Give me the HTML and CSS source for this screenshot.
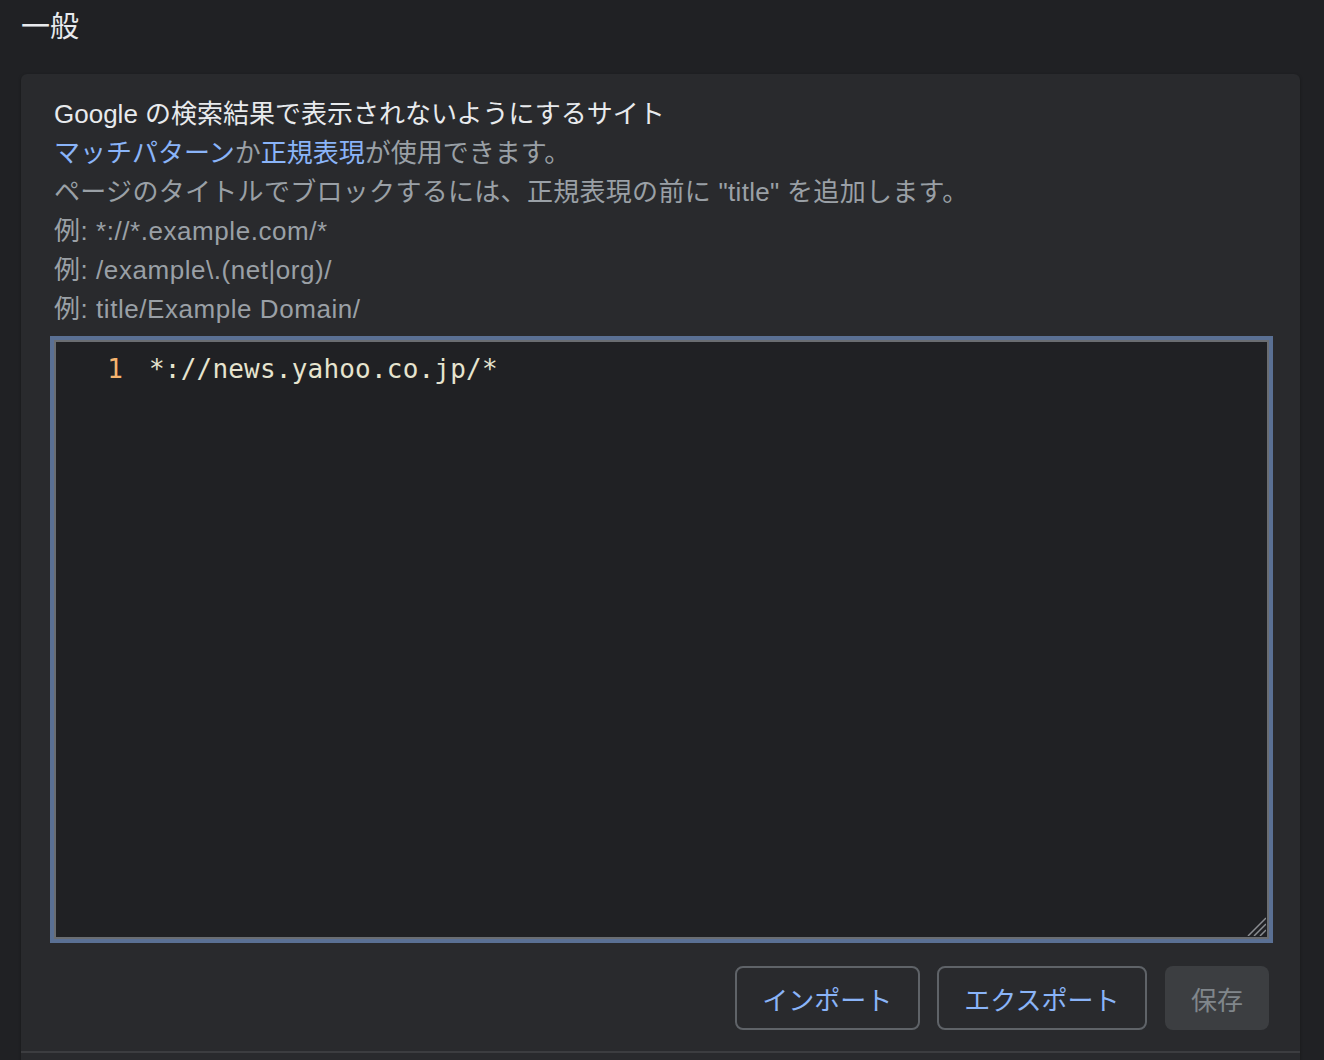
FILE: index.html
```html
<!DOCTYPE html>
<html lang="ja">
<head>
	<meta charset="UTF-8">
	<title>一般</title>
	<link rel="stylesheet" href="styles.css">
</head>
<body>
<div class="page">
	<h1 class="title">一般</h1>
	<div class="card">
		<div class="section">
			<div class="desc">
				<p class="label">Google の検索結果で表示されないようにするサイト</p>
				<p class="sub"><a href="#">マッチパターン</a>か<a href="#">正規表現</a>が使用できます。</p>
				<p class="hint wide">ページのタイトルでブロックするには、正規表現の前に "title" を追加します。</p>
				<p class="hint ex">例: *://*.example.com/*</p>
				<p class="hint ex">例: /example\.(net|org)/</p>
				<p class="hint ex">例: title/Example Domain/</p>
			</div>
			<div class="editor">
				<div class="gutter">1</div>
				<div class="code">*://news.yahoo.co.jp/*</div>
				<svg class="grip" width="20" height="20" viewBox="0 0 20 20">
					<path d="M20 2 L2 20 M20 8 L8 20 M20 14 L14 20" stroke="#8a8d91" stroke-width="1.5"/>
				</svg>
			</div>
			<div class="actions">
				<button class="btn">インポート</button>
				<button class="btn">エクスポート</button>
				<button class="btn save" disabled>保存</button>
			</div>
		</div>
		<div class="section next"></div>
	</div>
</div>
</body>
</html>
```

FILE: styles.css
```css
*{margin:0;padding:0;box-sizing:border-box;}
body{background:#202124;color:#e8eaed;font-family:"Liberation Sans","Noto Sans CJK JP",sans-serif;font-size:26px;}
.page{padding:6px 24px 0 21px;}
.title{font-size:29px;font-weight:normal;line-height:42px;margin:0;}
.card{margin-top:26px;background:#292a2d;border-radius:6px;box-shadow:0 1px 3px rgba(0,0,0,.35);}
.section{padding:21px 31px 21px 33px;border-bottom:2px solid #3c3d40;}
.section.next{border-bottom:none;height:60px;}
.desc p{line-height:39px;}
.desc .label{color:#e8eaed;}
.desc .sub{color:#9aa0a6;}
.desc a{color:#8ab4f8;text-decoration:none;}
.desc .hint{color:#9aa0a6;}
.desc .wide{letter-spacing:0.3px;}
.desc .ex{letter-spacing:0.55px;}
.editor{position:relative;display:flex;margin-top:11px;height:599px;background:#202124;border:2px solid #6a6d71;outline:4px solid #5a7094;font-family:"DejaVu Sans Mono",monospace;font-size:26px;line-height:39px;padding-top:8px;}
.gutter{width:67px;text-align:right;color:#f5b46f;}
.code{padding-left:26px;color:#e6e4cf;letter-spacing:0.2px;}
.grip{position:absolute;right:1px;bottom:1px;}
.actions{display:flex;justify-content:flex-end;gap:17px;margin-top:27px;}
.btn{height:64px;padding:0 25.5px;border:2px solid #5f6368;border-radius:8px;background:transparent;color:#8ab4f8;font-family:"Liberation Sans","Noto Sans CJK JP",sans-serif;font-size:26px;}
.btn.save{border:none;padding:0 26px;background:#3c3e41;color:#80868b;margin-left:1px;}
```
